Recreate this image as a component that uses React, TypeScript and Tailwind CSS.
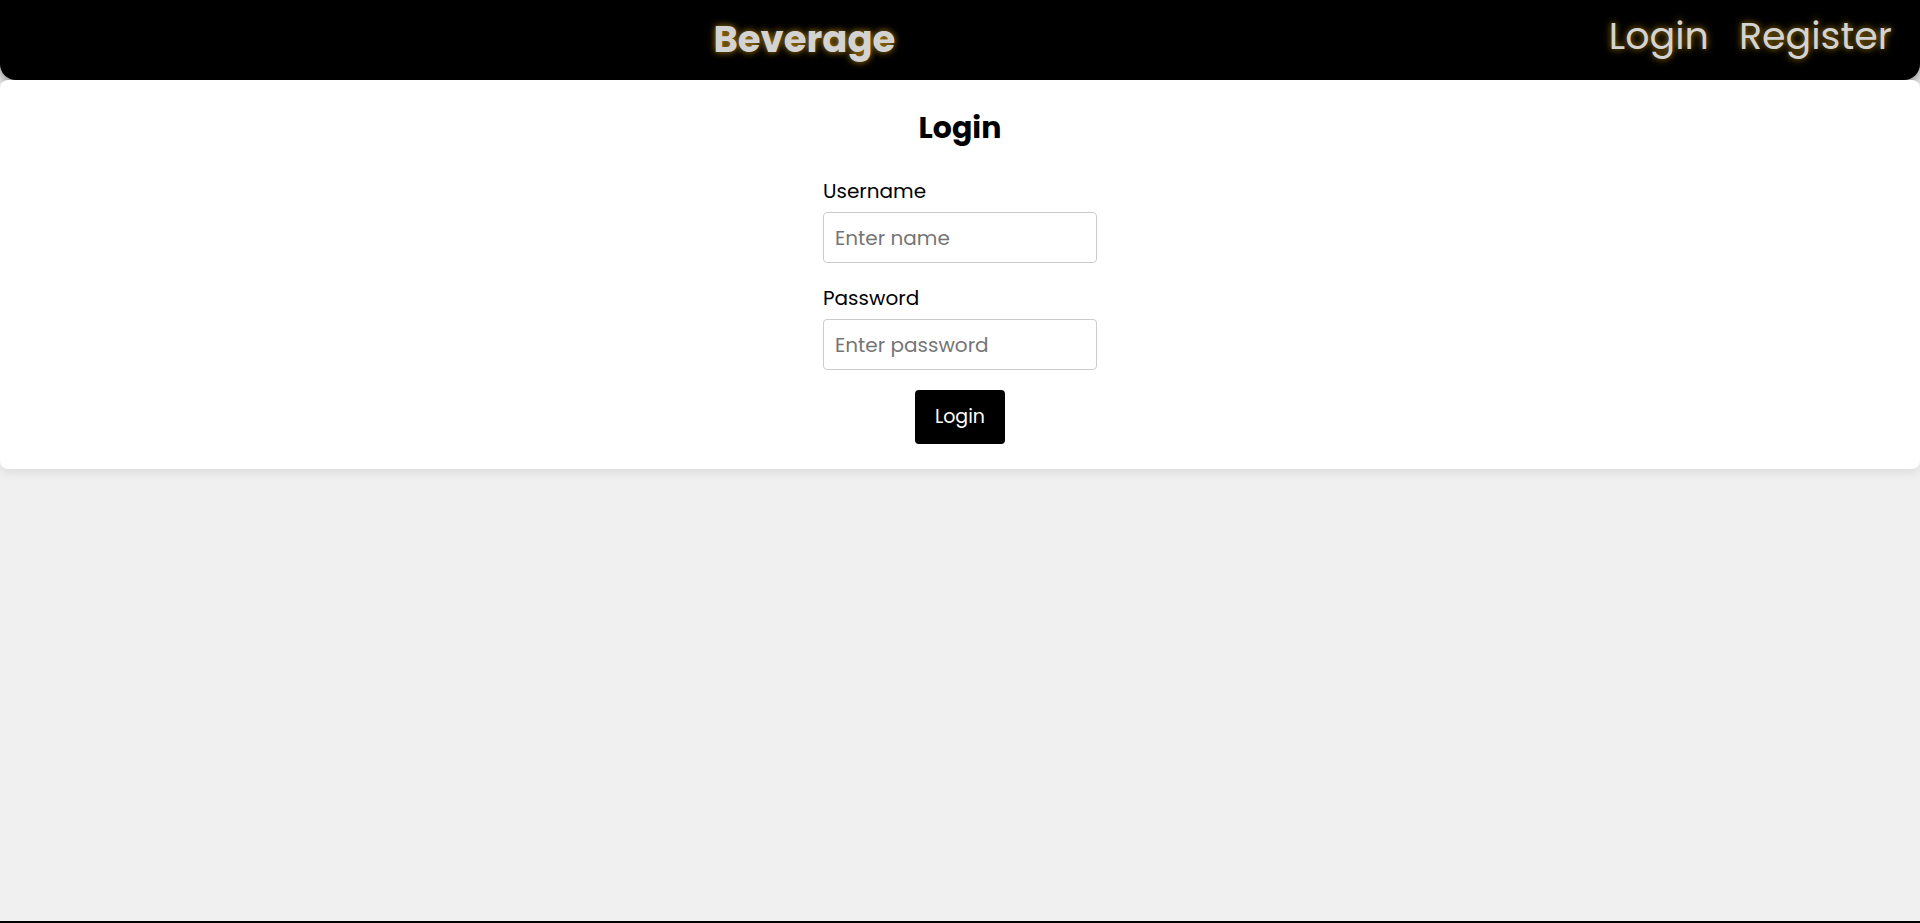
import React from 'react';

export default function App() {
  const font = { fontFamily: 'Poppins, "DejaVu Sans", sans-serif' };

  return (
    <div className="min-h-screen bg-[#f0f0f0] flex flex-col" style={font}>
      <div className="min-h-[921px] flex flex-col">
        {/* Navbar */}
        <nav className="h-20 bg-black rounded-b-2xl shadow-[0_4px_12px_#808080] flex items-center pr-[28px]">
          <div className="flex-1 text-center">
            <span className="text-[37px] font-bold text-[#d3d3d3] [text-shadow:0_0_7px_#b8860b]">Beverage</span>
          </div>
          <div className="flex items-center gap-[30px] mb-[10px]">
            <a className="text-[38px] text-[#d3d3d3] [text-shadow:0_0_7px_#b8860b] cursor-pointer">Login</a>
            <a className="text-[38px] text-[#d3d3d3] [text-shadow:0_0_7px_#b8860b] cursor-pointer">Register</a>
          </div>
        </nav>

        {/* Login card */}
        <div className="bg-white rounded-lg shadow-[0_4px_10px_rgba(0,0,0,0.08)] pt-[32px] pb-[25px] flex flex-col items-center">
          <h2 className="text-[30px] leading-[32px] font-bold text-black">Login</h2>
          <form className="w-[274px] mt-[35px] flex flex-col">
            <label className="text-[20px] leading-[24px] text-black">Username</label>
            <input
              type="text"
              placeholder="Enter name"
              className="mt-[9px] h-[51px] px-[11px] border border-[#ccc] rounded text-[20px] placeholder:text-[#757575] outline-none"
            />
            <label className="mt-[23px] text-[20px] leading-[24px] text-black">Password</label>
            <input
              type="password"
              placeholder="Enter password"
              className="mt-[9px] h-[51px] px-[11px] border border-[#ccc] rounded text-[20px] placeholder:text-[#757575] outline-none"
            />
            <button
              type="button"
              className="mt-5 self-center w-[90px] h-[54px] bg-black text-white text-[19px] rounded"
            >
              Login
            </button>
          </form>
        </div>
      </div>
      <footer className="h-16 bg-black" />
    </div>
  );
}
